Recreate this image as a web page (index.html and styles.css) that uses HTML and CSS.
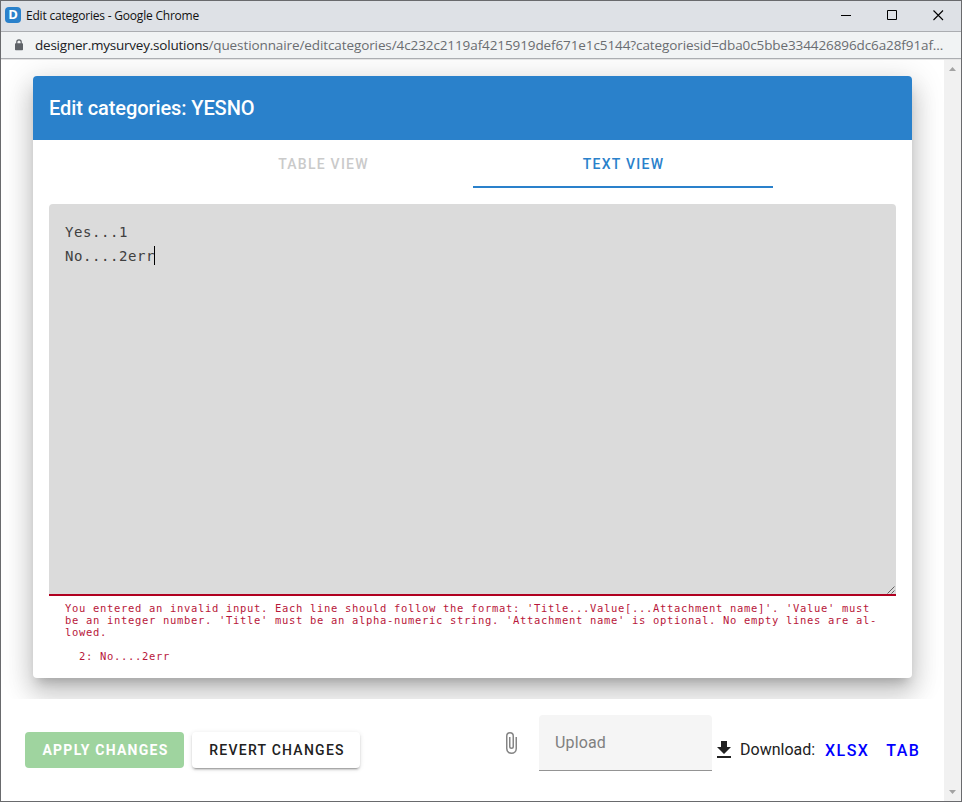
FILE: index.html
```html
<!DOCTYPE html>
<html lang="en">
<head>
<meta charset="utf-8">
<title>Edit categories</title>
<link rel="stylesheet" href="styles.css">
</head>
<body>
<div class="window">
  <header class="titlebar">
    <span class="favicon">D</span>
    <span class="window-title">Edit categories - Google Chrome</span>
    <div class="controls">
      <svg width="11" height="11" viewBox="0 0 11 11"><path d="M0 5.5h10" stroke="#000"/></svg>
      <svg width="11" height="11" viewBox="0 0 11 11"><path d="M.5.5h9v9h-9z" fill="none" stroke="#000"/></svg>
      <svg width="11" height="11" viewBox="0 0 11 11"><path d="M.5.5l9.500 9.500M10 .5l-9.500 9.500" stroke="#000" stroke-width="1.1"/></svg>
    </div>
  </header>
  <div class="addressbar">
    <svg class="lock" width="8" height="12" viewBox="0 0 8 12"><path d="M1.8 5V3a2.2 2.2 0 0 1 4.4 0v2" fill="none" stroke="#5f6368" stroke-width="1.2"/><rect y="4.3" width="8" height="7" rx=".8" fill="#5f6368"/></svg>
    <span class="url"><span class="host">designer.mysurvey.solutions</span><span class="path">/questionnaire/editcategories/4c232c2119af4215919def671e1c5144?categoriesid=dba0c5bbe334426896dc6a28f91af...</span></span>
  </div>
  <div class="viewport">
    <main class="page">
      <section class="stage">
        <div class="card">
          <h1 class="card-title">Edit categories: YESNO</h1>
          <nav class="tabs">
            <a class="tab">TABLE VIEW</a>
            <a class="tab active">TEXT VIEW</a>
          </nav>
          <div class="editor">
            <div class="line">Yes...1</div>
            <div class="line">No....2err<span class="caret"></span></div>
            <svg class="grip" width="8" height="8" viewBox="0 0 8 8"><path d="M.5 7.5l7-7M4.5 7.5l3-3" stroke="#555" stroke-width=".9"/></svg>
          </div>
          <pre class="error">You entered an invalid input. Each line should follow the format: 'Title...Value[...Attachment name]'. 'Value' must
be an integer number. 'Title' must be an alpha-numeric string. 'Attachment name' is optional. No empty lines are al-
lowed.

  2: No....2err</pre>
        </div>
      </section>
      <footer class="actions">
        <button class="btn apply">APPLY CHANGES</button>
        <button class="btn revert">REVERT CHANGES</button>
        <svg class="clip" width="24" height="24" viewBox="0 0 24 24"><path fill="#858585" d="M16.5 6v11.5a4 4 0 0 1-8 0V5a2.500 2.500 0 0 1 5 0v10.500a1 1 0 0 1-2 0V6H10v9.500a2.500 2.500 0 0 0 5 0V5a4 4 0 0 0-8 0v12.500a5.500 5.500 0 0 0 11 0V6z"/></svg>
        <div class="upload">Upload</div>
        <svg class="dl" width="14" height="17" viewBox="5 3 14 17"><path fill="#212121" d="M5 20h14v-2H5v2zM19 9h-4V3H9v6H5l7 7z"/></svg>
        <span class="dl-label">Download:</span>
        <a class="link xlsx">XLSX</a>
        <a class="link tab-link">TAB</a>
      </footer>
    </main>
    <div class="scrollbar">
      <svg width="7" height="4" viewBox="0 0 7 4"><path d="M0 4L3.500 0 7 4z" fill="#a3a3a3"/></svg>
      <svg width="7" height="4" viewBox="0 0 7 4"><path d="M0 0L3.500 4 7 0z" fill="#a3a3a3"/></svg>
    </div>
  </div>
</div>
</body>
</html>
```

FILE: styles.css
```css
* { box-sizing: border-box; }
body { margin: 0; font-family: Roboto, sans-serif; color: #212121; }
.window { width: 962px; height: 802px; border: 1px solid #696a6d; background: #fff; display: flex; flex-direction: column; overflow: hidden; }
.titlebar { height: 31px; flex: none; background: #dee1e6; border-bottom: 1px solid #abadb1; display: flex; align-items: center; padding: 0 17px 1px 4px; }
.favicon { width: 16px; height: 16px; margin-bottom: 1px; border-radius: 4px; background: #2a81cb; color: #fff; font: 700 13px/15px "Open Sans", sans-serif; text-align: center; }
.window-title { margin-left: 5px; font: 12px/16px "Open Sans", sans-serif; color: #111; letter-spacing: -.21px; white-space: nowrap; }
.controls { margin-left: auto; display: flex; gap: 35px; }
.addressbar { height: 27px; flex: none; background: #f1f3f4; border-bottom: 1px solid #abadb1; display: flex; align-items: center; padding: 0 0 0 14px; }
.lock { flex: none; margin-bottom: 1px; }
.url { margin-left: 12px; white-space: nowrap; font: 13.5px/20px "Open Sans", sans-serif; color: #6a6d71; letter-spacing: -.1px; }
.host { color: #202124; letter-spacing: -.22px; }
.viewport { flex: 1; display: flex; min-height: 0; border-top: 1px solid #e4e4e4; }
.page { width: 943px; display: flex; flex-direction: column; }
.stage { height: 639px; flex: none; padding: 16px 32px 0; overflow: hidden; }
.card { width: 879px; height: 602px; background: #fff; border-radius: 4px; box-shadow: 0 8px 10px -5px rgba(0,0,0,.2), 0 16px 24px 2px rgba(0,0,0,.14), 0 6px 30px 5px rgba(0,0,0,.12); }
.card-title { margin: 0; height: 64px; padding-left: 16px; background: #2a81cb; border-radius: 4px 4px 0 0; color: #fff; font-size: 20px; font-weight: 500; line-height: 64px; letter-spacing: -.09px; }
.tabs { height: 48px; display: flex; justify-content: center; }
.tab { width: 300px; padding-left: 2px; line-height: 48px; text-align: center; font-size: 14px; font-weight: 500; letter-spacing: 1.25px; color: #cacaca; }
.tab.active { color: #2a81cb; border-bottom: 2px solid #2a81cb; }
.editor { position: relative; height: 392px; margin: 16px 16px 0; padding: 16px; background: #dbdbdb; border-bottom: 2px solid #b00020; border-radius: 4px 4px 0 0; font: 14px/24px "DejaVu Sans Mono", monospace; letter-spacing: .57px; color: #404040; }
.line { height: 24px; display: flex; align-items: center; }
.caret { width: 1px; height: 19px; margin: 0 0 1px -1px; background: #000; }
.grip { position: absolute; right: 1px; bottom: 0; }
.error { margin: 6px 32px 0; font: 10.5px/12px "DejaVu Sans Mono", monospace; letter-spacing: .679px; color: #b8173a; }
.actions { height: 102px; display: flex; align-items: flex-start; padding: 16px 0 0 24px; }
.btn { height: 36px; margin-top: 17px; border: 0; border-radius: 4px; padding: 0 0 0 2px; font: 500 14px/36px Roboto, sans-serif; letter-spacing: 1.25px; }
.apply { width: 159px; background: #9fd49f; color: #fff; font-weight: 700; }
.revert { width: 168px; margin-left: 8px; background: #fff; color: #212121; box-shadow: 0 3px 1px -2px rgba(0,0,0,.2), 0 2px 2px rgba(0,0,0,.14), 0 1px 5px rgba(0,0,0,.12); }
.clip { margin: 16px 0 0 139px; }
.upload { width: 173px; height: 56px; margin-left: 16px; padding-left: 16px; background: #f5f5f5; border-bottom: 1px solid #949494; border-radius: 4px 4px 0 0; color: #808080; font-size: 16px; line-height: 56px; letter-spacing: .15px; }
.dl { margin: 26px 0 0 5px; }
.dl-label, .link { margin-top: 23px; font-size: 16px; line-height: 24px; }
.dl-label { margin-left: 9px; }
.link { margin-top: 24px; color: #00f; font-weight: 500; letter-spacing: 1.4px; }
.xlsx { margin-left: 10px; }
.tab-link { margin-left: 17px; }
.scrollbar { width: 17px; background: #f1f1f1; display: flex; flex-direction: column; align-items: center; justify-content: space-between; padding: 7px 0 7px; }
```
